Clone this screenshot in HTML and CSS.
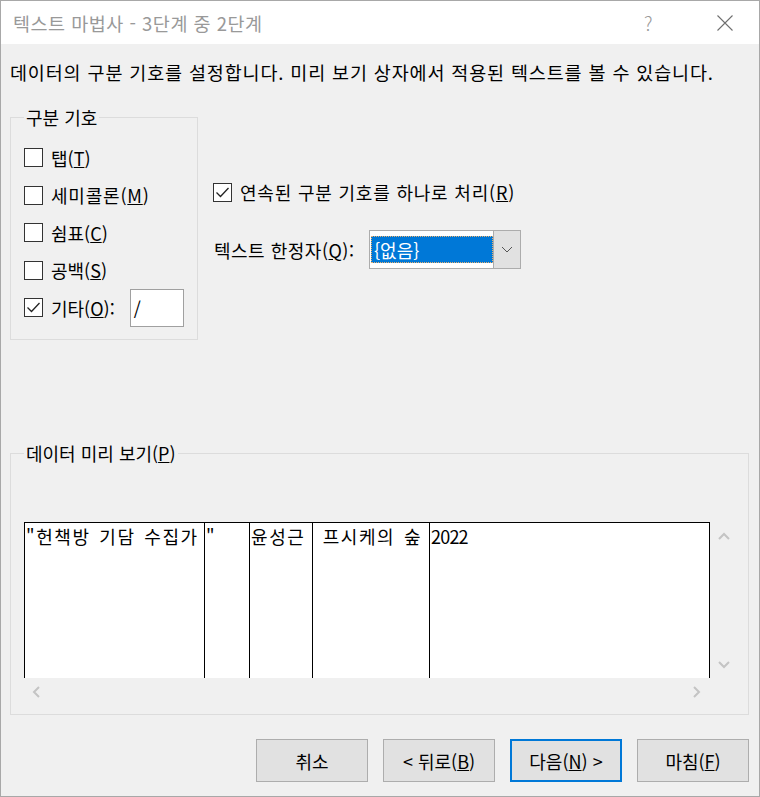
FILE: index.html
```html
<!DOCTYPE html>
<html lang="ko">
<head>
<meta charset="utf-8">
<title>텍스트 마법사</title>
<link rel="stylesheet" href="styles.css">
</head>
<body>
<div class="window">
  <div class="titlebar">
    <span class="title">텍스트 마법사 - 3단계 중 2단계</span>
    <span class="help">?</span>
    <span class="close">
      <svg width="16" height="16" viewBox="0 0 16 16"><path d="M0.5 0.5 L15.5 15.5 M15.5 0.5 L0.5 15.5" stroke="#6f6f6f" stroke-width="1.1" fill="none"/></svg>
    </span>
  </div>
  <div class="body">
    <p class="desc">데이터의 구분 기호를 설정합니다. 미리 보기 상자에서 적용된 텍스트를 볼 수 있습니다.</p>
    <div class="top-row">
      <fieldset class="group delims">
        <legend>구분 기호</legend>
        <label class="check-row"><span class="box"></span><span>탭(<u>T</u>)</span></label>
        <label class="check-row"><span class="box"></span><span class="wide">세미콜론(<u>M</u>)</span></label>
        <label class="check-row"><span class="box"></span><span>쉼표(<u>C</u>)</span></label>
        <label class="check-row"><span class="box"></span><span>공백(<u>S</u>)</span></label>
        <label class="check-row other"><span class="box checked"><svg width="17" height="17" viewBox="0 0 17 17"><path d="M2.5 8.5 L6.5 12.5 L14.5 4" stroke="#222" stroke-width="1.3" fill="none"/></svg></span><span>기타(<u>O</u>):</span><span class="other-input">/</span></label>
      </fieldset>
      <div class="options">
        <label class="check-row"><span class="box checked"><svg width="17" height="17" viewBox="0 0 17 17"><path d="M2.5 8.5 L6.5 12.5 L14.5 4" stroke="#222" stroke-width="1.3" fill="none"/></svg></span><span class="spaced">연속된 구분 기호를 하나로 처리(<u>R</u>)</span></label>
        <div class="qualifier">
          <span class="q-label">텍스트 한정자(<u>Q</u>):</span>
          <div class="combo">
            <span class="combo-value"><span class="focus">{없음}</span></span>
            <span class="combo-btn"><svg width="12" height="7" viewBox="0 0 12 7"><path d="M1 1 L6 6 L11 1" stroke="#555" stroke-width="1" fill="none"/></svg></span>
          </div>
        </div>
      </div>
    </div>
    <fieldset class="group preview-group">
      <legend>데이터 미리 보기(<u>P</u>)</legend>
      <div class="preview">
        <div class="grid">
          <div class="col c1">"헌책방 기담 수집가</div>
          <div class="col c2">"</div>
          <div class="col c3">윤성근</div>
          <div class="col c4">&nbsp;프시케의 숲</div>
          <div class="col c5">2022</div>
        </div>
        <div class="vscroll">
          <svg width="12" height="8" viewBox="0 0 12 8"><path d="M1 7 L6 2 L11 7" stroke="#c4c4c4" stroke-width="2" fill="none"/></svg>
          <svg width="12" height="8" viewBox="0 0 12 8"><path d="M1 1 L6 6 L11 1" stroke="#c4c4c4" stroke-width="2" fill="none"/></svg>
        </div>
        <div class="hscroll">
          <svg width="8" height="12" viewBox="0 0 8 12"><path d="M7 1 L2 6 L7 11" stroke="#c4c4c4" stroke-width="2" fill="none"/></svg>
          <svg width="8" height="12" viewBox="0 0 8 12"><path d="M1 1 L6 6 L1 11" stroke="#c4c4c4" stroke-width="2" fill="none"/></svg>
        </div>
        <div class="corner"></div>
      </div>
    </fieldset>
    <div class="buttons">
      <button class="btn">취소</button>
      <button class="btn">&lt; 뒤로(<u>B</u>)</button>
      <button class="btn default">다음(<u>N</u>) &gt;</button>
      <button class="btn">마침(<u>F</u>)</button>
    </div>
  </div>
</div>
</body>
</html>
```

FILE: styles.css
```css
* { box-sizing: border-box; }
html, body { margin: 0; padding: 0; }
body {
  font-family: "Noto Sans CJK KR", "Malgun Gothic", sans-serif;
  font-size: 18px;
  line-height: 24px;
  color: #000;
  background: #f0f0f0;
}
.window {
  width: 760px;
  height: 797px;
  border: 1px solid #a8a8a8;
  background: #f0f0f0;
  display: flex;
  flex-direction: column;
}
.titlebar {
  height: 43px;
  background: #fff;
  display: flex;
  align-items: center;
  padding-left: 12px;
  flex-shrink: 0;
}
.title {
  flex: 1;
  color: #999;
  font-size: 18.5px;
  letter-spacing: 0.5px;
}
.help {
  color: #999;
  font-size: 19px;
  font-weight: 300;
  width: 20px;
  margin-right: 53px;
}
.close {
  width: 16px;
  height: 16px;
  margin-right: 26px;
  display: flex;
}
.body {
  flex: 1;
  display: flex;
  flex-direction: column;
  padding: 0 10px 0 9px;
}
.desc {
  margin: 16px 0 0 0;
  font-size: 18.5px;
  letter-spacing: 0.85px;
}
.top-row {
  display: flex;
  margin-top: 21px;
}
.group {
  margin: 0;
  border: 1px solid #dcdcdc;
  padding: 0 0 0 8px;
}
.group legend {
  padding: 0 2px;
  font-size: 18px;
  line-height: 24px;
}
.delims {
  width: 188px;
  height: 235px;
  padding-top: 10px;
  padding-left: 13px;
}
.check-row {
  display: flex;
  align-items: center;
  height: 37.5px;
  white-space: nowrap;
}
.wide { letter-spacing: 0.8px; }
.spaced { letter-spacing: 0.8px; }
.box {
  width: 19px;
  height: 19px;
  border: 1px solid #333;
  background: #fff;
  margin-right: 8px;
  display: flex;
  align-items: center;
  justify-content: center;
  flex-shrink: 0;
}
.other-input {
  width: 54px;
  height: 38px;
  background: #fff;
  border: 1px solid #a0a0a0;
  margin-left: 15px;
  padding-left: 3px;
  line-height: 36px;
}
.options {
  margin-left: 15px;
  padding-top: 75px;
  display: flex;
  flex-direction: column;
}
.options .check-row {
  height: 24px;
}
.qualifier {
  display: flex;
  align-items: center;
  margin-top: 26px;
  margin-left: 1px;
}
.q-label { width: 155px; letter-spacing: 0.5px; }
.combo {
  width: 152px;
  height: 39px;
  border: 1px solid #acacac;
  background: #fff;
  display: flex;
  padding: 5px 0 5px 1px;
}
.combo-value {
  flex: 1;
  background: #0078d7;
  color: #fff;
  display: flex;
  align-items: center;
}
.focus {
  flex: 1;
  align-self: stretch;
  display: flex;
  align-items: center;
  padding-left: 3px;
  outline: 1px dotted #e8b070;
  outline-offset: -1px;
}
.combo-btn {
  width: 27px;
  margin: -5px 0;
  background: #e1e1e1;
  border-left: 1px solid #acacac;
  display: flex;
  align-items: center;
  justify-content: center;
}
.preview-group {
  width: 739px;
  height: 274px;
  margin-top: 101px;
  padding: 57px 0 0 13px;
}
.preview {
  display: grid;
  grid-template-columns: 686px 28px;
  grid-template-rows: 156px 27px;
}
.grid {
  display: flex;
  background: #fff;
  border-top: 1px solid #000;
  border-left: 1px solid #000;
  font-size: 18px;
  letter-spacing: 1.6px;
  word-spacing: 2px;
  line-height: 26px;
  overflow: hidden;
}
.col {
  border-right: 1px solid #000;
  white-space: nowrap;
  padding-left: 1px;
  overflow: hidden;
}
.c1 { width: 180px; }
.c2 { width: 45px; }
.c3 { width: 63px; }
.c4 { width: 117px; }
.c5 { width: 280px; letter-spacing: -0.8px; }
.vscroll {
  display: flex;
  flex-direction: column;
  justify-content: space-between;
  align-items: center;
  padding: 10px 0 9px 0;
}
.hscroll {
  display: flex;
  justify-content: space-between;
  align-items: center;
  padding: 0 9px 0 8px;
}
.buttons {
  display: flex;
  justify-content: flex-end;
  gap: 15px;
  margin-top: 24px;
}
.btn {
  width: 112px;
  height: 43px;
  background: #e1e1e1;
  border: 1px solid #adadad;
  font-family: inherit;
  font-size: 18px;
  color: #000;
  padding: 0;
}
.btn.default {
  border: 2px solid #0078d7;
}
```
